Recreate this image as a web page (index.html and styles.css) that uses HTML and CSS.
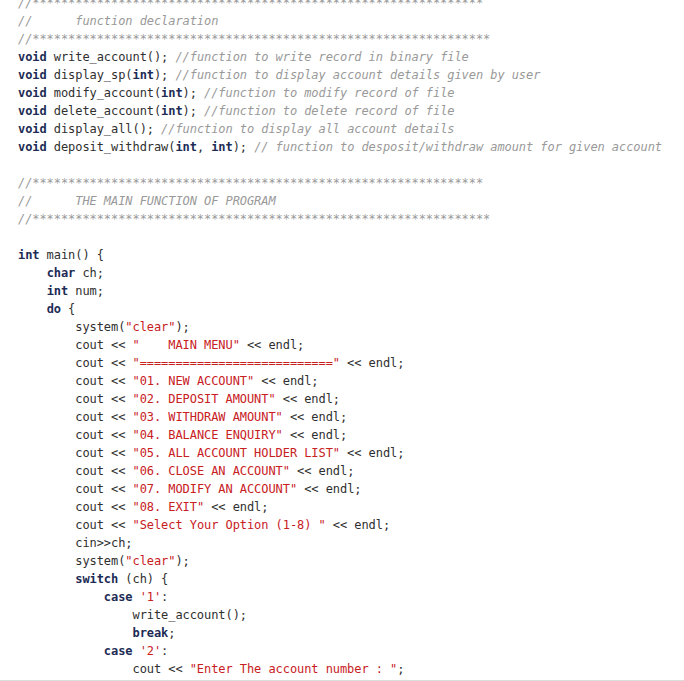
FILE: index.html
```html
<!DOCTYPE html>
<html>
<head>
<meta charset="utf-8">
<link rel="stylesheet" href="styles.css">
</head>
<body>
<div class="code-box">
<pre class="code"><span class="c">//***************************************************************</span>
<span class="c">//      function declaration</span>
<span class="c">//****************************************************************</span>
<span class="k">void</span> write_account(); <span class="c">//function to write record in binary file</span>
<span class="k">void</span> display_sp(<span class="k">int</span>); <span class="c">//function to display account details given by user</span>
<span class="k">void</span> modify_account(<span class="k">int</span>); <span class="c">//function to modify record of file</span>
<span class="k">void</span> delete_account(<span class="k">int</span>); <span class="c">//function to delete record of file</span>
<span class="k">void</span> display_all(); <span class="c">//function to display all account details</span>
<span class="k">void</span> deposit_withdraw(<span class="k">int</span>, <span class="k">int</span>); <span class="c">// function to desposit/withdraw amount for given account</span>

<span class="c">//***************************************************************</span>
<span class="c">//      THE MAIN FUNCTION OF PROGRAM</span>
<span class="c">//****************************************************************</span>

<span class="k">int</span> main() {
    <span class="k">char</span> ch;
    <span class="k">int</span> num;
    <span class="k">do</span> {
        system(<span class="s">"clear"</span>);
        cout &lt;&lt; <span class="s">"    MAIN MENU"</span> &lt;&lt; endl;
        cout &lt;&lt; <span class="s">"==========================="</span> &lt;&lt; endl;
        cout &lt;&lt; <span class="s">"01. NEW ACCOUNT"</span> &lt;&lt; endl;
        cout &lt;&lt; <span class="s">"02. DEPOSIT AMOUNT"</span> &lt;&lt; endl;
        cout &lt;&lt; <span class="s">"03. WITHDRAW AMOUNT"</span> &lt;&lt; endl;
        cout &lt;&lt; <span class="s">"04. BALANCE ENQUIRY"</span> &lt;&lt; endl;
        cout &lt;&lt; <span class="s">"05. ALL ACCOUNT HOLDER LIST"</span> &lt;&lt; endl;
        cout &lt;&lt; <span class="s">"06. CLOSE AN ACCOUNT"</span> &lt;&lt; endl;
        cout &lt;&lt; <span class="s">"07. MODIFY AN ACCOUNT"</span> &lt;&lt; endl;
        cout &lt;&lt; <span class="s">"08. EXIT"</span> &lt;&lt; endl;
        cout &lt;&lt; <span class="s">"Select Your Option (1-8) "</span> &lt;&lt; endl;
        cin&gt;&gt;ch;
        system(<span class="s">"clear"</span>);
        <span class="k">switch</span> (ch) {
            <span class="k">case</span> <span class="s">'1'</span>:
                write_account();
                <span class="k">break</span>;
            <span class="k">case</span> <span class="s">'2'</span>:
                cout &lt;&lt; <span class="s">"Enter The account number : "</span>;</pre>
</div>
</body>
</html>
```

FILE: styles.css
```css
html, body {
  margin: 0;
  padding: 0;
  background: #ffffff;
}

.code-box {
  height: 681px;
  overflow: hidden;
  box-sizing: border-box;
  border-bottom: 1px solid #dcdcdc;
}

.code {
  margin: -6px 0 0 0;
  padding: 0 0 0 18px;
  font-family: "DejaVu Sans Mono", monospace;
  font-size: 12px;
  letter-spacing: -0.07px;
  line-height: 18px;
  color: #2f2f2f;
  white-space: pre;
  font-variant-ligatures: none;
}

.k {
  color: #1d2c55;
  font-weight: bold;
}

.s {
  color: #c8201e;
}

.c {
  color: #999999;
  font-style: italic;
}
```
